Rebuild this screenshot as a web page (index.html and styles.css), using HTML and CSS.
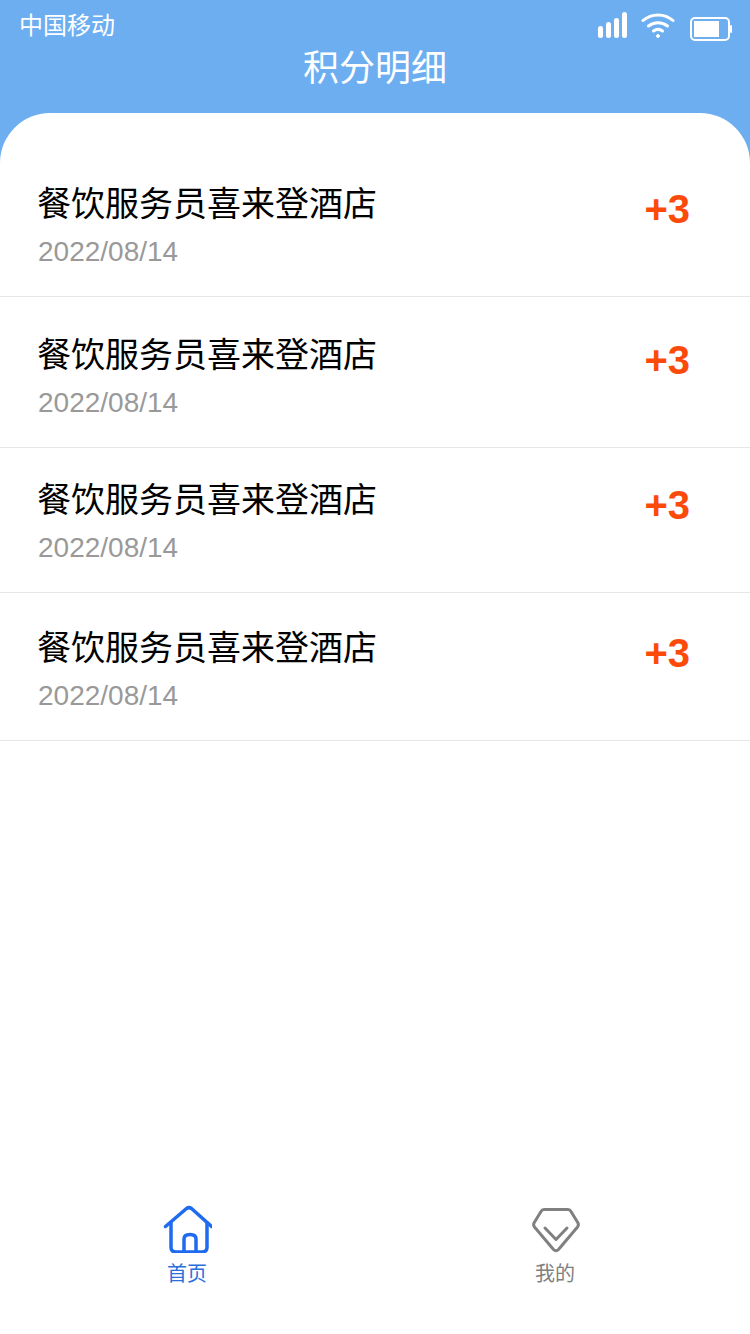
FILE: index.html
```html
<!DOCTYPE html>
<html lang="zh-CN">
<head>
    <meta charset="utf-8">
    <title>积分明细</title>
    <link rel="stylesheet" href="styles.css">
</head>
<body>
    <div class="page">
        <header class="header">
            <div class="status">
                <span class="carrier">中国移动</span>
                <div class="status-icons">
                    <svg class="signal" width="30" height="26" viewBox="0 0 30 26">
                        <rect x="0" y="14" width="5" height="12" rx="2.5" fill="#fff"/>
                        <rect x="8" y="10" width="5" height="16" rx="2.5" fill="#fff"/>
                        <rect x="16" y="6" width="5" height="20" rx="2.5" fill="#fff"/>
                        <rect x="24" y="0" width="5" height="26" rx="2.5" fill="#fff"/>
                    </svg>
                    <svg width="34" height="26" viewBox="0 0 34 26" fill="none" stroke="#fff" stroke-width="3" stroke-linecap="round">
                        <path d="M2 8.500C10.500 1 23.500 1 32 8.500"/>
                        <path d="M7.500 14C13 9.500 21 9.500 26.500 14"/>
                        <path d="M12.500 19C15.500 16.800 18.500 16.800 21.500 19"/>
                        <circle cx="17" cy="24" r="1.500" fill="#fff" stroke-width="1"/>
                    </svg>
                    <svg class="battery" width="42" height="24" viewBox="0 0 42 24">
                        <rect x="1" y="1" width="38" height="22" rx="4" fill="none" stroke="#fff" stroke-width="2"/>
                        <rect x="4" y="4" width="25" height="16" fill="#fff"/>
                        <rect x="40" y="8" width="2" height="8" rx="1" fill="#fff"/>
                    </svg>
                </div>
            </div>
            <h1 class="title">积分明细</h1>
        </header>

        <main class="card">
            <div class="row row-first">
                <div class="info">
                    <div class="name">餐饮服务员喜来登酒店</div>
                    <div class="date">2022/08/14</div>
                </div>
                <div class="points">+3</div>
            </div>
            <div class="row row-second">
                <div class="info">
                    <div class="name">餐饮服务员喜来登酒店</div>
                    <div class="date">2022/08/14</div>
                </div>
                <div class="points">+3</div>
            </div>
            <div class="row row-third">
                <div class="info">
                    <div class="name">餐饮服务员喜来登酒店</div>
                    <div class="date">2022/08/14</div>
                </div>
                <div class="points">+3</div>
            </div>
            <div class="row row-fourth">
                <div class="info">
                    <div class="name">餐饮服务员喜来登酒店</div>
                    <div class="date">2022/08/14</div>
                </div>
                <div class="points">+3</div>
            </div>
        </main>

        <nav class="tabbar">
            <div class="tab tab-active">
                <svg width="50" height="48" viewBox="-2 -1 50 48" fill="none" stroke="#1f6bf0" stroke-width="3.500" stroke-linecap="round" stroke-linejoin="round">
                    <path d="M1.500 20.500L22.500 2.500Q25 0.800 27.500 2.500L47.500 20.500"/>
                    <path d="M7 17V41Q7 46 12 46H38Q43 46 43 41V17"/>
                    <path d="M20 46V33Q20 28.500 26 28.500Q32 28.500 32 33V46"/>
                </svg>
                <span class="tab-label">首页</span>
            </div>
            <div class="tab">
                <svg width="50" height="48" viewBox="0 0 50 48" fill="none" stroke="#808080" stroke-width="3" stroke-linecap="round" stroke-linejoin="round">
                    <path d="M14 4.500H38Q40 4.500 41 6.500L48 18Q49 20 47.500 22L28.500 44.500Q26 47 23.500 44.500L4.500 22Q3 20 4 18L11 6.500Q12 4.500 14 4.500Z"/>
                    <path d="M15 23L26 34.500L37 23"/>
                </svg>
                <span class="tab-label">我的</span>
            </div>
        </nav>
    </div>
</body>
</html>
```

FILE: styles.css
```css
html, body {
    margin: 0;
    padding: 0;
}
body {
    background-color: #fff;
    font-family: "Liberation Sans", "Noto Sans CJK SC", sans-serif;
}
.page {
    width: 750px;
    height: 1334px;
    display: flex;
    flex-direction: column;
    overflow: hidden;
}
.header {
    height: 163px;
    flex-shrink: 0;
    background-color: #6daef0;
    color: #fff;
}
.status {
    height: 46px;
    padding: 6px 18px 0 19px;
    box-sizing: border-box;
    display: flex;
    justify-content: space-between;
    align-items: center;
}
.carrier {
    font-size: 24px;
    line-height: 40px;
}
.status-icons {
    display: flex;
    align-items: center;
    gap: 15px;
    margin-top: -2px;
}
.signal {
    margin-right: -2px;
}
.battery {
    margin-top: 7px;
}
.title {
    margin: 1px 0 0 0;
    font-size: 36px;
    font-weight: normal;
    line-height: 44px;
    text-align: center;
}
.card {
    flex: 1;
    margin-top: -50px;
    padding-top: 50px;
    background-color: #fff;
    border-radius: 50px 50px 0 0;
}
.row {
    display: flex;
    justify-content: space-between;
    box-sizing: border-box;
    padding: 0 60px 0 37px;
    border-bottom: 1px solid #e6e6e6;
}
.row-first { height: 134px; padding-top: 19px; }
.row-second { height: 151px; padding-top: 36px; }
.row-third { height: 145px; padding-top: 30px; }
.row-fourth { height: 148px; padding-top: 33px; }
.name {
    font-size: 34px;
    line-height: 44px;
    color: #000;
}
.date {
    margin-top: 4px;
    margin-left: 1px;
    font-size: 28px;
    line-height: 44px;
    color: #999;
}
.points {
    margin-top: 5px;
    font-size: 40px;
    line-height: 44px;
    font-weight: bold;
    color: #fc4a0a;
}
.tabbar {
    height: 150px;
    flex-shrink: 0;
    display: flex;
    padding: 0 0 0 3px;
    box-sizing: border-box;
    background-color: #fff;
}
.tab {
    width: 368px;
    display: flex;
    flex-direction: column;
    align-items: center;
    padding-top: 21px;
    box-sizing: border-box;
    color: #808080;
}
.tab-label {
    margin-top: 8px;
    font-size: 20px;
    line-height: 26px;
}
.tab-active {
    color: #2a6fdb;
}
```
